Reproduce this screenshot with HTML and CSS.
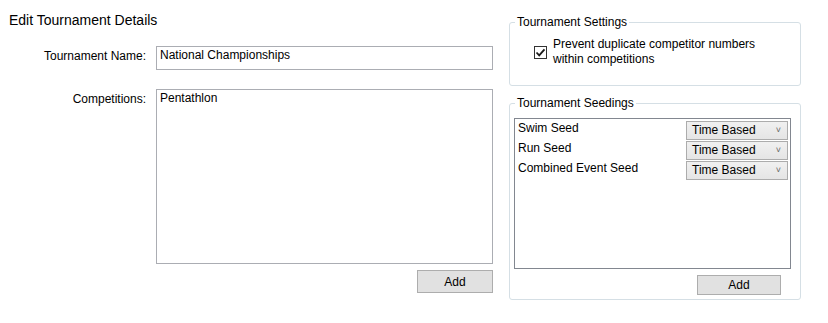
FILE: index.html
```html
<!DOCTYPE html>
<html>
<head>
<meta charset="utf-8">
<link rel="stylesheet" href="styles.css">
</head>
<body>
<div class="page">
  <div class="left">
    <div class="title">Edit Tournament Details</div>
    <div class="form">
      <div class="label label-name">Tournament Name:</div>
      <div class="textbox">National Championships</div>
      <div class="label label-comp">Competitions:</div>
      <div class="listbox">Pentathlon</div>
      <div></div>
      <div class="btn-row"><button class="btn btn-left">Add</button></div>
    </div>
  </div>
  <div class="right">
    <fieldset class="group group-settings">
      <legend class="legend">Tournament Settings</legend>
      <div class="check-row">
        <span class="checkbox">
          <svg width="11" height="11" viewBox="0 0 11 11"><path d="M1.5 5.5 L4.2 8.3 L9.5 2.3" fill="none" stroke="#1a1a1a" stroke-width="1.8"/></svg>
        </span>
        <span class="check-text">Prevent duplicate competitor numbers<br>within competitions</span>
      </div>
    </fieldset>
    <fieldset class="group group-seed">
      <legend class="legend">Tournament Seedings</legend>
      <div class="seedlist">
        <div class="seed-row"><span class="seed-name">Swim Seed</span><span class="combo">Time Based<span class="chev">&#709;</span></span></div>
        <div class="seed-row"><span class="seed-name">Run Seed</span><span class="combo">Time Based<span class="chev">&#709;</span></span></div>
        <div class="seed-row"><span class="seed-name">Combined Event Seed</span><span class="combo">Time Based<span class="chev">&#709;</span></span></div>
      </div>
      <div class="btn-row btn-row-seed"><button class="btn btn-right">Add</button></div>
    </fieldset>
  </div>
</div>
</body>
</html>
```

FILE: styles.css
```css
html, body {
  margin: 0;
  padding: 0;
  background: #ffffff;
}
body {
  font-family: "Liberation Sans", Arial, sans-serif;
  font-size: 12px;
  color: #000;
  width: 828px;
  height: 323px;
  overflow: hidden;
}
.page {
  display: flex;
  align-items: flex-start;
}
.left {
  width: 493px;
  flex: none;
}
.title {
  font-size: 14px;
  line-height: 18px;
  padding: 11px 0 0 9px;
  height: 18px;
}
.form {
  display: grid;
  grid-template-columns: 146px 337px;
  column-gap: 10px;
  margin-top: 17px;
}
.label {
  text-align: right;
  line-height: 15px;
}
.label-name {
  padding-top: 3px;
}
.label-comp {
  padding-top: 3px;
  margin-top: 19px;
}
.textbox {
  height: 24px;
  box-sizing: border-box;
  border: 1px solid #abadb3;
  padding: 1px 3px;
  line-height: 15px;
}
.listbox {
  margin-top: 19px;
  height: 175px;
  box-sizing: border-box;
  border: 1px solid #abadb3;
  padding: 1px 3px;
  line-height: 15px;
}
.btn-row {
  display: flex;
  justify-content: flex-end;
  margin-top: 6px;
}
.btn {
  font-family: inherit;
  font-size: 12px;
  color: #000;
  background: #e1e1e1;
  border: 1px solid #adadad;
  box-sizing: border-box;
  padding: 0;
  margin: 0;
}
.btn-left {
  width: 76px;
  height: 23px;
}
.right {
  margin-left: 16px;
  width: 292px;
  flex: none;
}
.group {
  margin: 0;
  padding: 0;
  border: 1px solid #d5dfe5;
  border-radius: 3px;
  box-sizing: border-box;
  width: 292px;
}
.legend {
  margin-left: 5px;
  padding: 0 2px;
  line-height: 16px;
  font-size: 12px;
}
.group-settings {
  margin-top: 14px;
  height: 72px;
}
.check-row {
  display: flex;
  align-items: center;
  padding: 7px 0 0 24px;
}
.checkbox {
  width: 13px;
  height: 13px;
  box-sizing: border-box;
  border: 1px solid #333;
  background: #fff;
  display: flex;
  align-items: center;
  justify-content: center;
  flex: none;
}
.check-text {
  margin-left: 6px;
  line-height: 15px;
}
.group-seed {
  margin-top: 9px;
  height: 205px;
}
.seedlist {
  margin: 7px 9px 0 4px;
  height: 151px;
  box-sizing: border-box;
  border: 1px solid #828790;
  padding: 2px 2px 0 3px;
  display: flex;
  flex-direction: column;
  gap: 1px;
}
.seed-row {
  display: flex;
  justify-content: space-between;
  align-items: flex-start;
  height: 19px;
}
.seed-name {
  line-height: 14px;
}
.combo {
  width: 102px;
  height: 19px;
  box-sizing: border-box;
  border: 1px solid #acacac;
  background: linear-gradient(#f0f0f0, #e5e5e5);
  display: flex;
  align-items: center;
  justify-content: space-between;
  padding: 0 6px 0 5px;
  line-height: 17px;
}
.chev {
  color: #606060;
  font-size: 9px;
}
.btn-row-seed {
  margin-top: 6px;
  margin-right: 19px;
}
.btn-right {
  width: 84px;
  height: 20px;
}
```
